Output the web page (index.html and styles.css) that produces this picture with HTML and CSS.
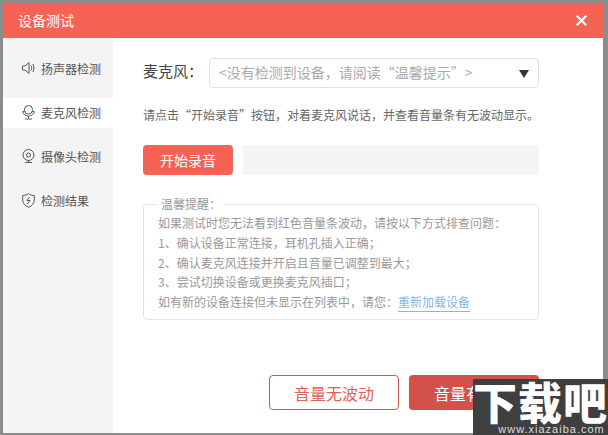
FILE: index.html
```html
<!DOCTYPE html>
<html lang="zh">
<head>
<meta charset="utf-8">
<title>设备测试</title>
<link rel="stylesheet" href="styles.css">
</head>
<body>
<div class="dialog">
  <header class="titlebar">
    <span class="title">设备测试</span>
    <svg class="close" width="11" height="11" viewBox="0 0 11 11"><path d="M.8 .8 10.200 10.200M10.200 .8 .8 10.200" stroke="#fff" stroke-width="2.2" fill="none"/></svg>
  </header>
  <div class="main">
    <nav class="sidebar">
      <div class="nav-item">
        <svg class="nav-icon" width="13" height="14" viewBox="0 0 13 14" fill="none" stroke="#555" stroke-width="1"><path d="M.5 5h2.500L7 1.500v11L3 9H.5zM9 4.500c1 1.500 1 3.500 0 5M10.800 3c1.600 2.500 1.600 5.500 0 8"/></svg>
        <span>扬声器检测</span>
      </div>
      <div class="nav-item active">
        <svg class="nav-icon" width="13" height="15" viewBox="0 0 13 15" fill="none" stroke="#555" stroke-width="1"><rect x="2.500" y=".5" width="8" height="8.500" rx="4"/><path d="M.5 6.500h2M10.500 6.500h2M.8 7c.5 2.500 2.800 4 5.700 4s5.200-1.500 5.700-4M6.500 11v2.500M3 14h7"/></svg>
        <span>麦克风检测</span>
      </div>
      <div class="nav-item">
        <svg class="nav-icon" width="13" height="15" viewBox="0 0 13 15" fill="none" stroke="#555" stroke-width="1"><circle cx="6.500" cy="6" r="5.500"/><circle cx="6.500" cy="6" r="2"/><path d="M3 13.500h7M6.500 11.500v2"/></svg>
        <span>摄像头检测</span>
      </div>
      <div class="nav-item">
        <svg class="nav-icon" width="13" height="15" viewBox="0 0 13 15" fill="none" stroke="#555" stroke-width="1"><path d="M6.500.6C8 1.800 10 2.500 12.300 2.600V7c0 3.500-2.500 6-5.800 7.300C3.200 13 .7 10.500.7 7V2.600C3 2.500 5 1.800 6.500.6zM7.500 4 5 7.500h3L5.500 11"/></svg>
        <span>检测结果</span>
      </div>
    </nav>
    <section class="content">
      <div class="mic-row">
        <label class="mic-label">麦克风：</label>
        <div class="select">
          <span class="select-text">&lt;没有检测到设备，请阅读“温馨提示”&gt;</span>
          <i class="arrow"></i>
        </div>
      </div>
      <p class="hint">请点击“开始录音”按钮，对着麦克风说话，并查看音量条有无波动显示。</p>
      <div class="record-row">
        <button class="btn-record">开始录音</button>
        <div class="meter"></div>
      </div>
      <fieldset class="tips">
        <legend>温馨提醒：</legend>
        <p>如果测试时您无法看到红色音量条波动，请按以下方式排查问题：</p>
        <p>1、确认设备正常连接，耳机孔插入正确；</p>
        <p>2、确认麦克风连接并开启且音量已调整到最大；</p>
        <p>3、尝试切换设备或更换麦克风插口；</p>
        <p>如有新的设备连接但未显示在列表中，请您：<a class="reload">重新加载设备</a></p>
      </fieldset>
      <div class="actions">
        <button class="btn btn-outline">音量无波动</button>
        <button class="btn btn-solid">音量有波动</button>
      </div>
    </section>
  </div>
</div>
<div class="watermark">
  <div class="wm-title">下载吧</div>
  <div class="wm-url">www.xiazaiba.com</div>
</div>
</body>
</html>
```

FILE: styles.css
```css
* { box-sizing: border-box; }
html, body { margin: 0; height: 100%; overflow: hidden; }
body {
  width: 608px;
  height: 435px;
  background: #8c8c8c;
  padding: 3px 5px 2px 3px;
  font-family: "Noto Sans CJK SC", "Liberation Sans", sans-serif;
  position: relative;
}
.dialog { width: 600px; height: 430px; background: #fff; display: flex; flex-direction: column; }
.titlebar {
  height: 35px;
  background: #f66355;
  display: flex;
  align-items: center;
  justify-content: space-between;
  padding: 0 16px 0 15px;
  flex: none;
}
.title { color: #fff; font-size: 14px; line-height: 35px; }
.close { display: block; }
.main { flex: 1; display: flex; min-height: 0; }
.sidebar { width: 110px; background: #f4f4f4; padding-top: 15px; flex: none; }
.nav-item {
  height: 30px;
  margin-bottom: 14px;
  display: flex;
  align-items: center;
  padding-left: 19px;
  gap: 6px;
  font-size: 12px;
  color: #555;
}
.nav-item.active { background: #fff; margin-top: 15px; margin-bottom: 13px; padding-bottom: 1px; }
.nav-icon { display: block; flex: none; }
.content { flex: 1; padding: 20px 64px 0 30px; display: flex; flex-direction: column; }
.mic-row { display: flex; align-items: center; height: 30px; }
.mic-label { width: 66px; font-size: 15px; line-height: 26px; padding-bottom: 4px; height: 30px; color: #444; flex: none; }
.select {
  width: 330px;
  height: 30px;
  border: 1px solid #e0e0e0;
  border-radius: 4px;
  display: flex;
  align-items: center;
  justify-content: space-between;
  padding: 0 9px;
  font-size: 14px;
  color: #aaa;
  flex: none;
}
.select-text { padding-bottom: 2px; }
.arrow {
  width: 0;
  height: 0;
  margin-top: 1px;
  border-left: 5px solid transparent;
  border-right: 5px solid transparent;
  border-top: 8px solid #333;
}
.hint { margin: 17px 0 0; font-size: 12px; line-height: 20px; color: #666; white-space: nowrap; }
.record-row { display: flex; gap: 10px; margin-top: 20px; height: 30px; flex: none; }
.btn-record {
  width: 90px;
  height: 30px;
  border: 0;
  border-radius: 4px;
  background: #f66355;
  color: #fff;
  font: inherit;
  font-size: 14px;
  padding: 0;
}
.meter { width: 296px; background: #f4f4f4; }
.tips {
  margin: 21px 0 0;
  width: 396px;
  height: 124px;
  border: 1px solid #e4e4e4;
  border-radius: 4px;
  padding: 1px 0 0 14px;
  min-width: 0;
  flex: none;
}
.tips legend { margin-left: -1px; padding: 0 4px; font-size: 12px; line-height: 16px; color: #999; }
.tips p { margin: 0; font-size: 12px; line-height: 19.75px; color: #999; white-space: nowrap; }
.reload { color: #7fb8e8; border-bottom: 1px solid #7fb8e8; padding-bottom: 1px; }
.actions { display: flex; gap: 10px; justify-content: flex-end; margin-top: 55px; }
.btn {
  width: 130px;
  height: 35px;
  border-radius: 4px;
  font: inherit;
  font-size: 16px;
  padding: 0;
}
.btn-outline { background: #fff; border: 1px solid #d9534b; color: #e0635a; }
.btn-solid { background: #d4504a; border: 0; color: #fff; }
.watermark {
  position: absolute;
  left: 473px;
  top: 379px;
  width: 135px;
  height: 56px;
  background: #3f3f3f;
  color: #fff;
  text-align: center;
  overflow: hidden;
}
.wm-title { font-size: 44px; line-height: 45px; font-weight: 900; white-space: nowrap; letter-spacing: 1px; }
.wm-url { font-family: "Liberation Sans", sans-serif; font-size: 11px; line-height: 11px; letter-spacing: 1px; padding-left: 22px; white-space: nowrap; color: #ddd; }
```
